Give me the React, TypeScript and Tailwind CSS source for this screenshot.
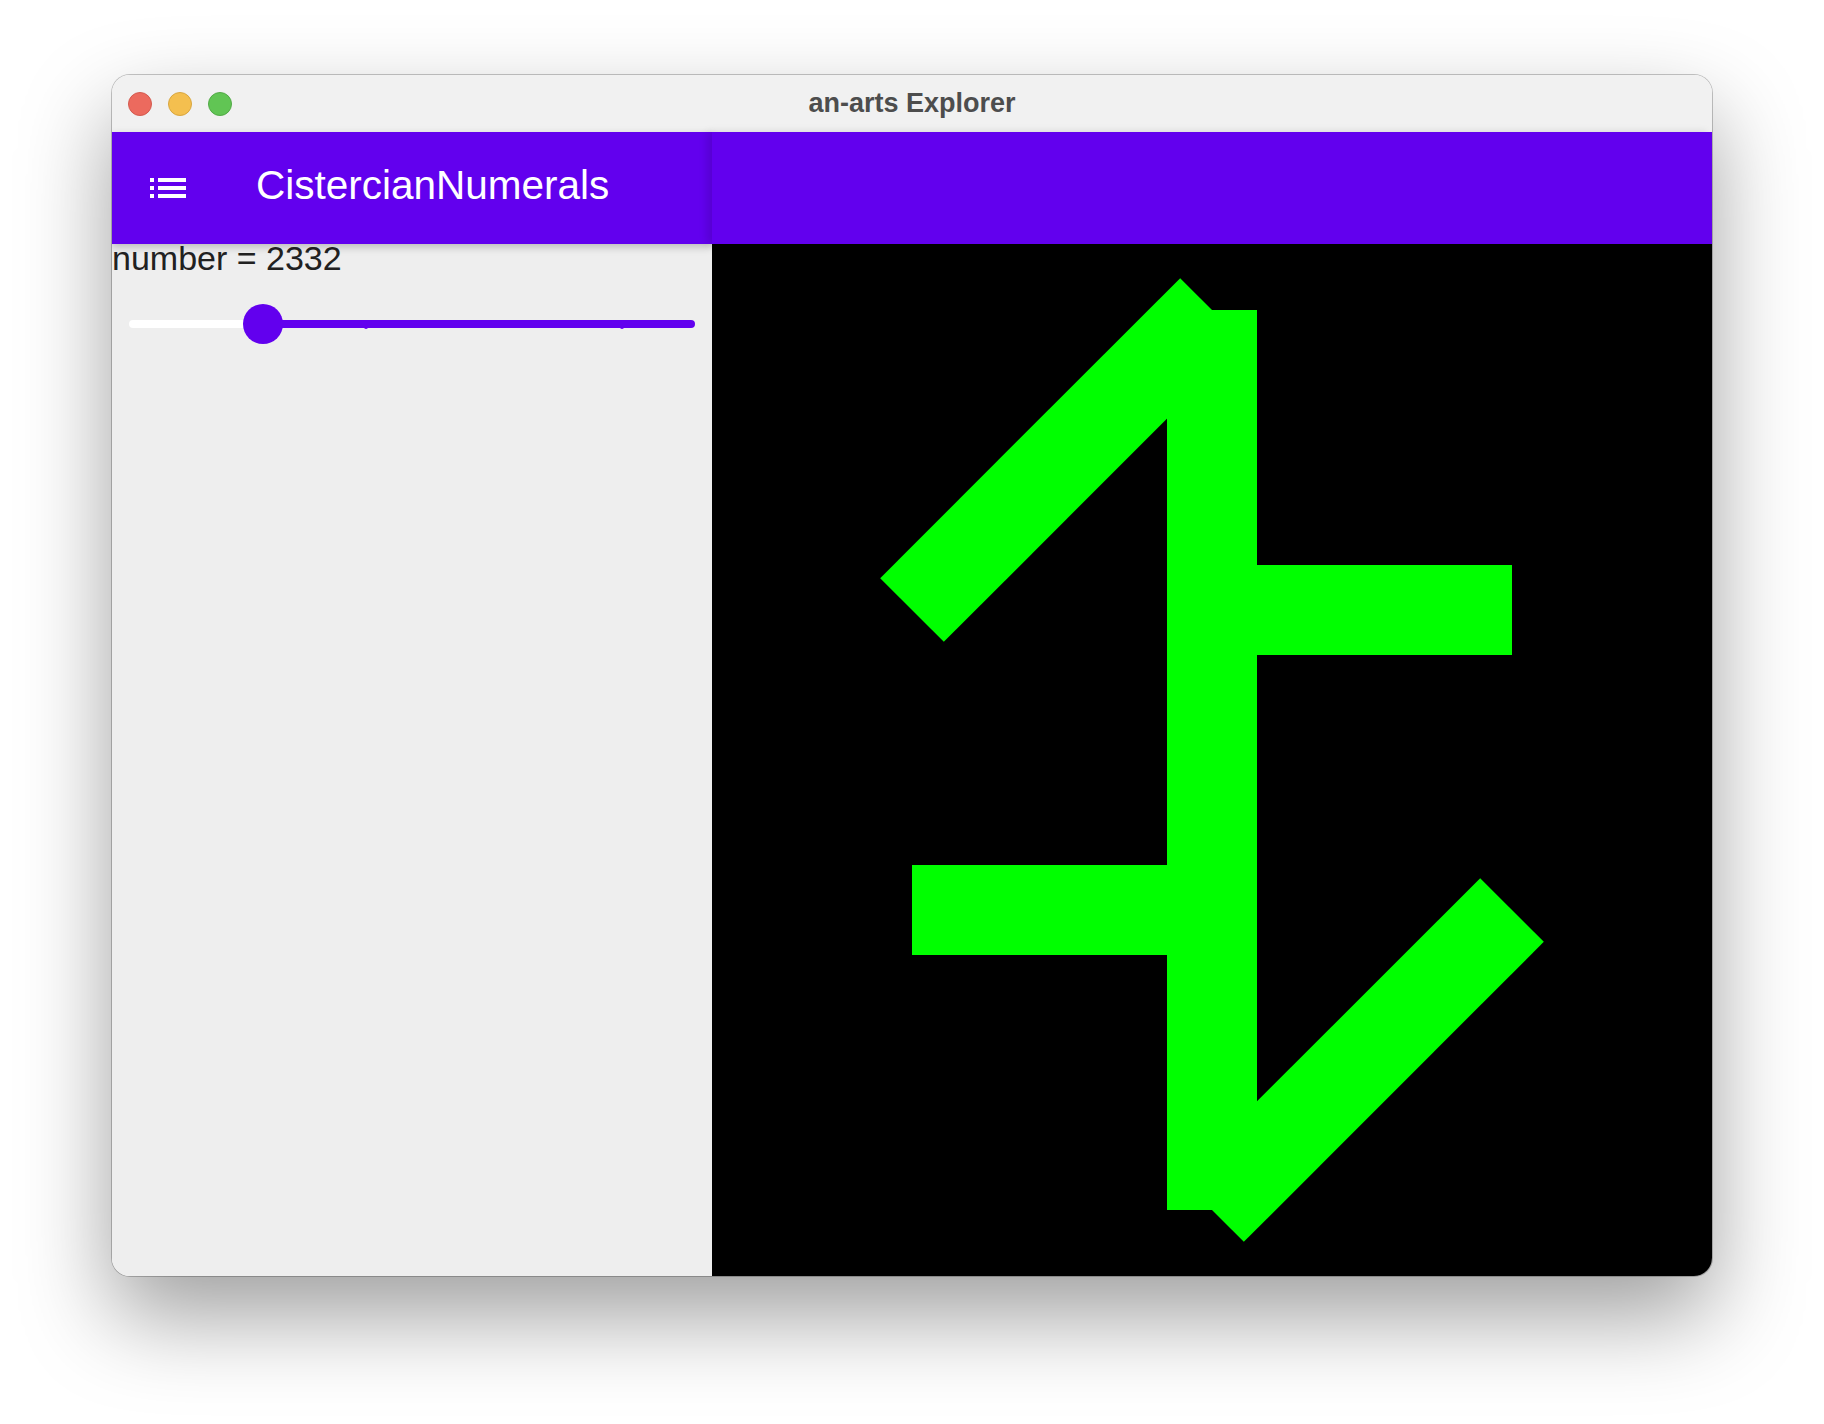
import React from "react";

function ListIcon() {
  return (
    <svg width="48" height="48" viewBox="0 0 24 24" fill="white">
      <path d="M3 13h2v-2H3v2zm0 4h2v-2H3v2zm0-8h2V7H3v2zm4 4h14v-2H7v2zm0 4h14v-2H7v2zM7 7v2h14V7H7z" />
    </svg>
  );
}

function Cistercian() {
  const sw = 90;
  const c = "#00FF00";
  return (
    <svg width="1000" height="1032" viewBox="0 0 1000 1032" className="block">
      <rect x="0" y="0" width="1000" height="1032" fill="#000" />
      <g stroke={c} strokeWidth={sw} strokeLinecap="butt" fill="none">
        <line x1="500" y1="66" x2="500" y2="966" />
        <line x1="500" y1="366" x2="800" y2="366" />
        <line x1="500" y1="66" x2="200" y2="366" />
        <line x1="500" y1="666" x2="200" y2="666" />
        <line x1="500" y1="966" x2="800" y2="666" />
      </g>
    </svg>
  );
}

function Slider() {
  const fraction = 0.236;
  return (
    <div className="mt-[25px] h-[48px] px-[17px] flex items-center">
      <div className="relative w-full h-[8px]">
        <div className="absolute inset-y-0 left-0 rounded-l-full bg-white" style={{ width: `${fraction * 100}%` }} />
        <div className="absolute inset-y-0 right-0 rounded-full bg-[#6200EE]" style={{ width: `${(1 - fraction) * 100}%` }} />
        <div className="absolute left-[235px] top-[4px] w-[4px] h-[5px] rounded-full bg-[#6200EE]" />
        <div className="absolute left-[491px] top-[4px] w-[4px] h-[5px] rounded-full bg-[#6200EE]" />
        <div
          className="absolute top-1/2 w-[40px] h-[40px] -translate-x-1/2 -translate-y-1/2 rounded-full bg-[#6200EE]"
          style={{ left: `${fraction * 100}%` }}
        />
      </div>
    </div>
  );
}

export default function App() {
  return (
    <div className="w-[1824px] h-[1424px] bg-white pl-[112px] pt-[75px]" style={{ fontFamily: '"Liberation Sans", Arial, sans-serif' }}>
      <div className="w-[1600px] h-[1201px] rounded-[18px] overflow-hidden flex flex-col shadow-[0_40px_90px_rgba(0,0,0,0.38),0_0_0_1px_rgba(0,0,0,0.22)]">
        <div className="h-[57px] bg-[#F1F1F1] flex items-center relative shrink-0">
          <div className="flex items-center gap-[16px] pl-[16px]">
            <div className="w-[24px] h-[24px] rounded-full bg-[#EC6A5E] border border-[#D35A4F]" />
            <div className="w-[24px] h-[24px] rounded-full bg-[#F4BF4F] border border-[#D8A640]" />
            <div className="w-[24px] h-[24px] rounded-full bg-[#61C554] border border-[#52A947]" />
          </div>
          <div className="absolute inset-0 flex items-center justify-center pointer-events-none">
            <span className="text-[27px] font-bold text-[#4D4D4D]">an-arts Explorer</span>
          </div>
        </div>
        <div className="flex flex-1 min-h-0">
          <div className="w-[600px] flex flex-col">
            <div className="h-[112px] bg-[#6200EE] flex items-center relative z-10 shadow-[0_3px_8px_rgba(0,0,0,0.22)]">
              <div className="w-[112px] flex justify-center">
                <ListIcon />
              </div>
              <span className="ml-[32px] text-[40.5px] leading-[41px] text-white -mt-[5px]">CistercianNumerals</span>
            </div>
            <div className="flex-1 bg-[#EEEEEE] flex flex-col">
              <div className="-mt-[3px] text-[34px] leading-[34px] text-[#212121] relative z-20">number = 2332</div>
              <Slider />
            </div>
          </div>
          <div className="w-[1000px] flex flex-col relative z-20">
            <div className="h-[112px] bg-[#6200EE] shadow-[-5px_0_8px_rgba(0,0,0,0.12)]" />
            <Cistercian />
          </div>
        </div>
      </div>
    </div>
  );
}
